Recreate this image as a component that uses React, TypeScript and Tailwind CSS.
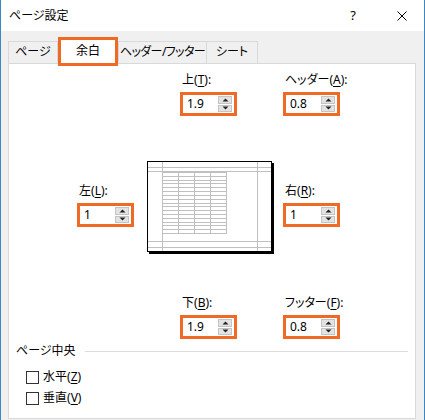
import { useMemo } from "react";

const ORANGE = "border-[#f06a25]";

const Arrow = ({ up }: { up: boolean }) => (
  <svg width="7" height="4" viewBox="0 0 7 4">
    <path d={up ? "M0.5 3.5 L3.5 0.5 L6.5 3.5 Z" : "M0.5 0.5 L3.5 3.5 L6.5 0.5 Z"} fill="#222" />
  </svg>
);

const SpinBox = ({ value }: { value: string }) => {
  return (
    <div className={`w-[57px] h-[24px] border-[3px] ${ORANGE} bg-white flex`}>
      <div className="flex-1 pl-[4px] text-[12px] leading-[18px] text-black">{value}</div>
      <div className="w-[14px] mr-[2px] py-px flex flex-col gap-px">
        <div className="flex-1 bg-[#e3e3e3] border border-[#c4c4c4] flex items-center justify-center">
          <Arrow up={true} />
        </div>
        <div className="flex-1 bg-[#e3e3e3] border border-[#c4c4c4] flex items-center justify-center">
          <Arrow up={false} />
        </div>
      </div>
    </div>
  );
};

interface FieldProps {
  label: string;
  mnemonic: string;
  value: string;
}

const Field = (props: FieldProps) => {
  const { label, mnemonic, value } = props;
  return (
    <div className="w-[57px] flex flex-col">
      <div className="h-[16px] pl-[2px] text-[12px] leading-[16px] whitespace-nowrap text-black">
        <span>
          {label}(<span className="underline underline-offset-2">{mnemonic}</span>):
        </span>
      </div>
      <div className="mt-[4px]">
        <SpinBox value={value} />
      </div>
    </div>
  );
};

const Preview = () => {
  // table rows of the little sheet
  const rows = useMemo(() => {
    const ys: number[] = [];
    for (let i = 0; i <= 16; i++) ys.push(Math.round(10 + (i * 61) / 16) + 0.5);
    return ys;
  }, []);
  const cols = [14.5, 30.5, 46.5, 62.5, 78.5];

  return (
    <div className="w-[125px] h-[91px] border border-black bg-white shadow-[2px_2px_0_#000]">
      <svg width="123" height="89" viewBox="0 0 123 89" shapeRendering="crispEdges">
        <g stroke="#c0c0c0" strokeWidth="1">
          <line x1="0" y1="5.5" x2="123" y2="5.5" />
          <line x1="0" y1="9.5" x2="123" y2="9.5" />
          <line x1="0" y1="79.5" x2="123" y2="79.5" />
          <line x1="0" y1="85.5" x2="123" y2="85.5" />
          <line x1="14.5" y1="0" x2="14.5" y2="89" />
          <line x1="109.5" y1="0" x2="109.5" y2="89" />
          {rows.map((y) => (
            <line key={y} x1="14.5" y1={y} x2="78.5" y2={y} />
          ))}
          {cols.map((x) => (
            <line key={x} x1={x} y1={rows[0]} x2={x} y2={rows[rows.length - 1]} />
          ))}
        </g>
      </svg>
    </div>
  );
};

const CheckRow = ({ label, mnemonic }: { label: string; mnemonic: string }) => (
  <div className="h-[16px] flex items-center">
    <div className="w-[13px] h-[13px] border border-[#333] bg-white" />
    <div className="ml-[4px] text-[12px] leading-[16px] text-black">
      {label}(<span className="underline underline-offset-2">{mnemonic}</span>)
    </div>
  </div>
);

export default function App() {
  return (
    <div
      className="w-[425px] h-[420px] overflow-hidden bg-[#f0f0f0] border-x border-[#3b86c6] flex flex-col [font-feature-settings:'palt']"
      style={{ fontFamily: '"Noto Sans", "Noto Sans CJK JP", sans-serif' }}
    >
      {/* title bar */}
      <div className="h-[31px] bg-white flex items-center pl-[8px] shrink-0">
        <div className="text-[12px] text-black">ページ設定</div>
        <div className="ml-auto w-[12px] text-[13px] text-black mr-[38px] text-center">?</div>
        <div className="mr-[17px]">
          <svg width="10" height="10" viewBox="0 0 10 10">
            <path d="M0.5 0.5 L9.5 9.5 M9.5 0.5 L0.5 9.5" stroke="#000" strokeWidth="1" />
          </svg>
        </div>
      </div>

      {/* tabs */}
      <div className="h-[32px] flex items-end pl-[7px] shrink-0">
        <div className="w-[50px] h-[22px] border border-b-0 border-[#d9d9d9] text-[12px] leading-[20px] text-center text-black">
          ページ
        </div>
        <div className={`relative z-10 -mb-[3px] w-[60px] h-[29px] border-[3px] ${ORANGE} bg-white text-[12px] leading-[22px] text-center text-black`}>
          余白
        </div>
        <div className="w-[89px] h-[22px] border border-b-0 border-[#d9d9d9] text-[12px] leading-[20px] text-center text-black whitespace-nowrap tracking-[-0.6px] overflow-hidden">
          ヘッダー/フッター
        </div>
        <div className="w-[51px] h-[22px] border border-b-0 border-l-0 border-[#d9d9d9] text-[12px] leading-[20px] text-center text-black">
          シート
        </div>
      </div>

      {/* panel */}
      <div className="ml-[7px] w-[408px] h-[356px] border border-[#d9d9d9] bg-white flex flex-col">
        <div className="mt-[8px] pl-[171px] flex">
          <Field label="上" mnemonic="T" value="1.9" />
          <div className="ml-[46px]">
            <Field label="ヘッダー" mnemonic="A" value="0.8" />
          </div>
        </div>

        <div className="mt-[45px] pl-[68px] flex items-start">
          <div className="mt-[22px]">
            <Field label="左" mnemonic="L" value="1" />
          </div>
          <div className="ml-[13px]">
            <Preview />
          </div>
          <div className="ml-[11px] mt-[22px]">
            <Field label="右" mnemonic="R" value="1" />
          </div>
        </div>

        <div className="mt-[43px] pl-[171px] flex">
          <Field label="下" mnemonic="B" value="1.9" />
          <div className="ml-[46px]">
            <Field label="フッター" mnemonic="F" value="0.8" />
          </div>
        </div>

        <div className="mt-[4px] pl-[7px] pr-[7px] h-[16px] flex items-center">
          <div className="text-[12px] leading-[16px] text-black">ページ中央</div>
          <div className="ml-[9px] flex-1 h-px bg-[#dcdcdc]" />
        </div>

        <div className="mt-[10px] pl-[17px] flex flex-col gap-[5px]">
          <CheckRow label="水平" mnemonic="Z" />
          <CheckRow label="垂直" mnemonic="V" />
        </div>
      </div>
    </div>
  );
}
